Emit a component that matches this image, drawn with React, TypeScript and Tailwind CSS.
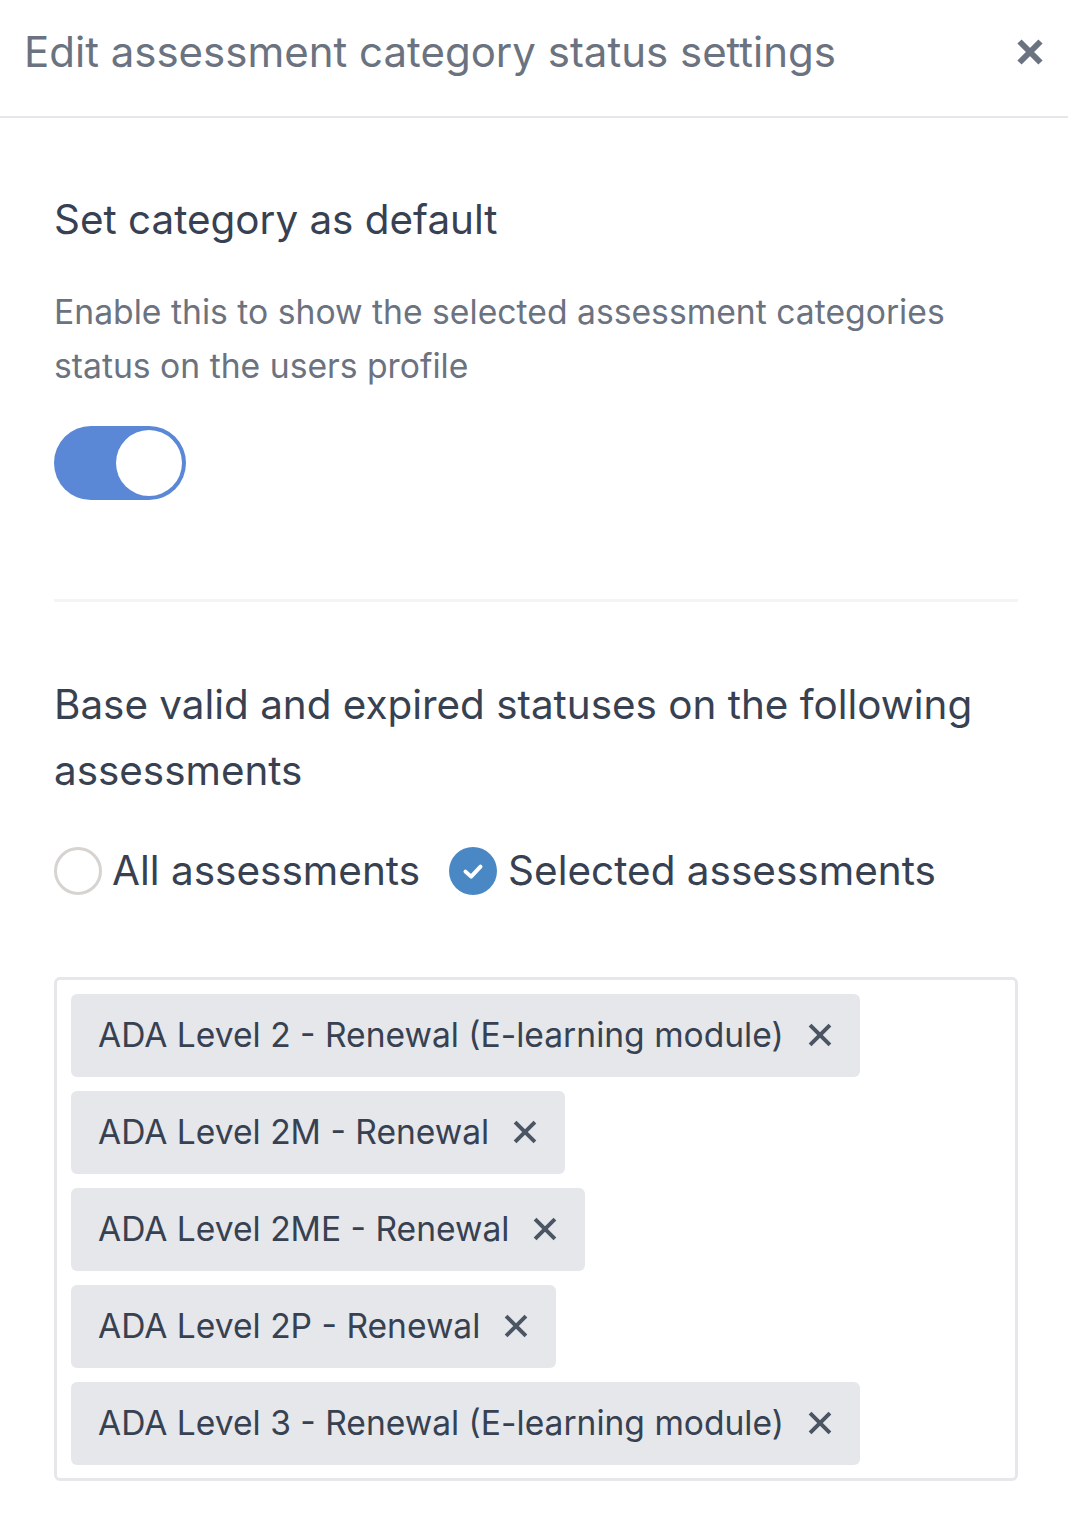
import { useState } from 'react';

const TAGS = [
  'ADA Level 2 - Renewal (E-learning module)',
  'ADA Level 2M - Renewal',
  'ADA Level 2ME - Renewal',
  'ADA Level 2P - Renewal',
  'ADA Level 3 - Renewal (E-learning module)',
  'ADA Level 3ME - Renewal',
];

function CloseIcon({ className }: { className?: string }) {
  return (
    <svg viewBox="0 0 24 24" className={className} fill="none" stroke="currentColor" strokeLinecap="butt">
      <path d="M5 5 L19 19 M19 5 L5 19" />
    </svg>
  );
}

function Check() {
  return (
    <svg viewBox="0 0 24 24" className="w-[30px] h-[30px]" fill="none" stroke="white" strokeWidth={3.2} strokeLinecap="round" strokeLinejoin="round">
      <path d="M6 12.5 L10.5 16.5 L18 8.5" />
    </svg>
  );
}

export default function App() {
  const [enabled, setEnabled] = useState(true);
  const [mode, setMode] = useState<'all' | 'selected'>('selected');
  const [tags, setTags] = useState(TAGS);

  return (
    <div className="w-[1068px] min-h-[1528px] bg-white font-['Inter',sans-serif] text-[#374151]">
      {/* Header */}
      <div className="flex items-center justify-between h-[118px] pl-[24px] pr-[20px] border-b-2 border-[#e5e7eb]">
        <h1 className="text-[42px] text-[#6b7280] pb-[14px]">Edit assessment category status settings</h1>
        <button className="text-[#6b7280] pb-[12px]">
          <CloseIcon className="w-[36px] h-[36px] stroke-[4]" />
        </button>
      </div>

      <div className="pl-[54px] pr-[50px] pt-[76px]">
        {/* Default toggle */}
        <h2 className="text-[40.4px] leading-[52px]">Set category as default</h2>
        <p className="mt-[39px] text-[33.7px] leading-[54px] text-[#6b7280]">
          Enable this to show the selected assessment categories status on the users profile
        </p>
        <button
          onClick={() => setEnabled(!enabled)}
          className={`mt-[33px] flex items-center w-[132px] h-[74px] rounded-full p-[4px] ${enabled ? 'bg-[#5a87d6] justify-end' : 'bg-[#d1d5db] justify-start'}`}
        >
          <span className="block w-[66px] h-[66px] rounded-full bg-white" />
        </button>

        <div className="mt-[99px] h-[3px] bg-[#f3f4f6]" />

        {/* Assessments */}
        <h2 className="mt-[70px] text-[40.4px] leading-[66px]">
          Base valid and expired statuses on the following assessments
        </h2>
        <div className="mt-[37px] flex items-center gap-[29px]">
          <label className="flex items-center gap-[10px] cursor-pointer" onClick={() => setMode('all')}>
            <span className={`w-[48px] h-[48px] rounded-full flex items-center justify-center ${mode === 'all' ? 'bg-[#4a88c5]' : 'border-[3px] border-[#d6d3d1]'}`}>
              {mode === 'all' && <Check />}
            </span>
            <span className="text-[40.5px]">All assessments</span>
          </label>
          <label className="flex items-center gap-[11px] cursor-pointer" onClick={() => setMode('selected')}>
            <span className={`w-[48px] h-[48px] rounded-full flex items-center justify-center ${mode === 'selected' ? 'bg-[#4a88c5]' : 'border-[3px] border-[#d6d3d1]'}`}>
              {mode === 'selected' && <Check />}
            </span>
            <span className="text-[40.5px]">Selected assessments</span>
          </label>
        </div>

        <div className="mt-[75px] h-[504px] border-[3px] border-[#e5e7eb] rounded-[6px] overflow-hidden px-[14px] pt-[14px]">
          <div className="flex flex-col items-start gap-[14px]">
            {tags.map(tag => (
              <div key={tag} className="flex items-center h-[83px] shrink-0 bg-[#e5e7eb] rounded-[6px] pl-[27px] pr-[23px]">
                <span className="text-[33.6px]">{tag}</span>
                <button onClick={() => setTags(tags.filter(t => t !== tag))} className="ml-[19px] text-[#4b5563]">
                  <CloseIcon className="w-[34px] h-[34px] stroke-[2.8]" />
                </button>
              </div>
            ))}
          </div>
        </div>
      </div>
    </div>
  );
}
